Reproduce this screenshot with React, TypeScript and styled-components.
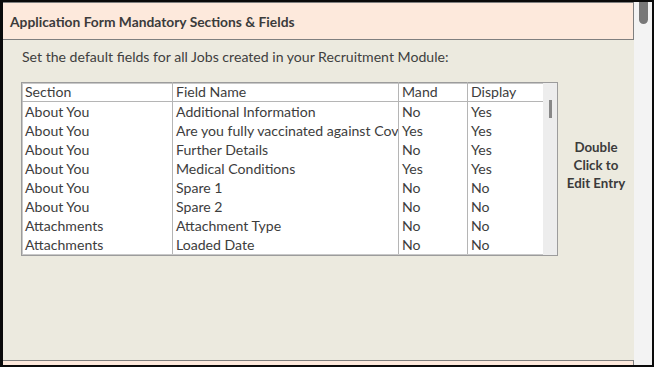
import React from "react";
import styled, { createGlobalStyle } from "styled-components";

const GlobalStyle = createGlobalStyle`
  html, body {
    margin: 0;
    padding: 0;
    background: #000;
  }
  body {
    font-family: Lato, "Open Sans", sans-serif;
  }
`

const Frame = styled.div`
  width: 654px;
  height: 367px;
  box-sizing: border-box;
  border-style: solid;
  border-color: #0a0a0a;
  border-width: 2px 2px 2px 3px;
  display: flex;
  overflow: hidden;
`

const Main = styled.div`
  flex: 1;
  display: flex;
  flex-direction: column;
  background: #eceadf;
`

const HeaderBand = styled.div`
  height: 36px;
  flex-shrink: 0;
  background: #fde9dc;
  border: 1px solid #7f7f7f;
  border-left: none;
  display: flex;
  align-items: center;
  padding-left: 7px;
  font-weight: bold;
  font-size: 13.8px;
  color: #3b3b3b;
`

const Content = styled.div`
  flex: 1;
  padding: 8px 0 0 18px;
  display: flex;
  flex-direction: column;
`

const Intro = styled.div`
  font-size: 14.1px;
  color: #404040;
  height: 18px;
  line-height: 18px;
  margin-left: 1px;
`

const Row = styled.div`
  display: flex;
  margin-top: 16px;
`

const GridBox = styled.div`
  width: 537px;
  height: 174px;
  box-sizing: border-box;
  border: 1px solid #9c9c9c;
  box-shadow: inset 0 0 0 1px #c8c8c8;
  background: #fff;
  display: flex;
`

const Table = styled.table`
  width: 518px;
  flex-shrink: 0;
  table-layout: fixed;
  border-collapse: collapse;
  align-self: flex-start;
  margin-top: -1px;
`

const Th = styled.th<{ $w: number }>`
  width: ${p => p.$w - 3}px;
  height: 19px;
  padding: 0 0 0 3px;
  text-align: left;
  font-weight: normal;
  font-size: 14.1px;
  color: #3d3d3d;
  border-left: 1px solid #b5b5b5;
  border-bottom: 1px solid #b5b5b5;
  white-space: nowrap;
  overflow: hidden;
  &:first-child { border-left: none; }
`

const Td = styled.td`
  height: 19px;
  padding: 0 0 0 3px;
  font-size: 14.1px;
  color: #3d3d3d;
  border-left: 1px solid #b5b5b5;
  white-space: nowrap;
  overflow: hidden;
  text-overflow: clip;
  &:first-child { border-left: none; }
`

const InnerScroll = styled.div`
  flex: 1;
  background: #ededed;
  display: flex;
  justify-content: center;
  padding-top: 17px;
`

const InnerThumb = styled.div`
  width: 3px;
  height: 18px;
  background: #888;
`

const Hint = styled.div`
  flex: 1;
  text-align: center;
  font-weight: bold;
  font-size: 13.3px;
  line-height: 18px;
  color: #3b3b3b;
  padding-top: 56px;
`

const BottomBand = styled.div`
  height: 4px;
  background: #fde9dc;
  border-top: 1px solid #7f7f7f;
  border-right: 1px solid #7f7f7f;
`

const ScrollTrack = styled.div`
  width: 18px;
  background: #f3f3f3;
  display: flex;
  justify-content: center;
`

const ScrollThumb = styled.div`
  width: 9px;
  height: 22px;
  background: #787878;
  border-radius: 0 0 5px 5px;
`

const columns: [string, number][] = [
  ["Section", 150],
  ["Field Name", 225],
  ["Mand", 68],
  ["Display", 75],
];

const rows = [
  ["About You", "Additional Information", "No", "Yes"],
  ["About You", "Are you fully vaccinated against Cov", "Yes", "Yes"],
  ["About You", "Further Details", "No", "Yes"],
  ["About You", "Medical Conditions", "Yes", "Yes"],
  ["About You", "Spare 1", "No", "No"],
  ["About You", "Spare 2", "No", "No"],
  ["Attachments", "Attachment Type", "No", "No"],
  ["Attachments", "Loaded Date", "No", "No"],
];

const App = (): JSX.Element => {
  return (
    <>
      <GlobalStyle />
      <Frame>
        <Main>
          <HeaderBand>Application Form Mandatory Sections &amp; Fields</HeaderBand>
          <Content>
            <Intro>Set the default fields for all Jobs created in your Recruitment Module:</Intro>
            <Row>
              <GridBox>
                <Table>
                  <thead>
                    <tr>
                      {columns.map(([label, w]) => <Th key={label} $w={w}>{label}</Th>)}
                    </tr>
                  </thead>
                  <tbody>
                    {rows.map((r, i) => (
                      <tr key={i}>
                        {r.map((c, j) => <Td key={j}>{c}</Td>)}
                      </tr>
                    ))}
                  </tbody>
                </Table>
                <InnerScroll><InnerThumb /></InnerScroll>
              </GridBox>
              <Hint>Double<br />Click to<br />Edit Entry</Hint>
            </Row>
          </Content>
          <BottomBand />
        </Main>
        <ScrollTrack><ScrollThumb /></ScrollTrack>
      </Frame>
    </>
  );
};

export default App;
